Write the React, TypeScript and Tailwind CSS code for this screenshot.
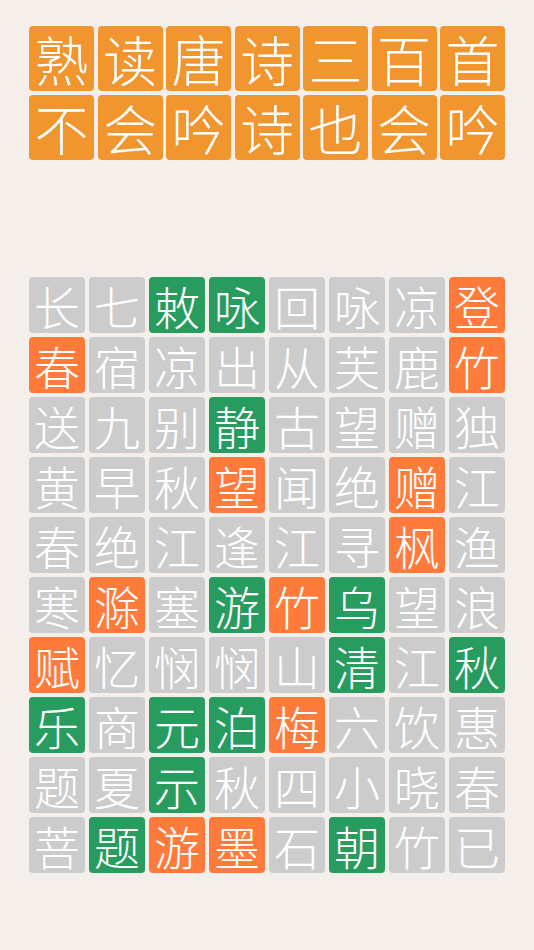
import React from 'react'

const TITLE = ['熟读唐诗三百首', '不会吟诗也会吟']

// g = grey, G = green, O = orange
const ROWS: [string, string][] = [
  ['长七敕咏回咏凉登', 'ggGGgggO'],
  ['春宿凉出从芙鹿竹', 'OggggggO'],
  ['送九别静古望赠独', 'gggGgggg'],
  ['黄早秋望闻绝赠江', 'gggOggOg'],
  ['春绝江逢江寻枫渔', 'ggggggOg'],
  ['寒滁塞游竹乌望浪', 'gOgGOGgg'],
  ['赋忆悯悯山清江秋', 'OggggGgG'],
  ['乐商元泊梅六饮惠', 'GgGGOggg'],
  ['题夏示秋四小晓春', 'ggGggggg'],
  ['菩题游墨石朝竹已', 'gGOOgGgg'],
]

const tileColor: Record<string, string> = {
  g: 'bg-[#cccccc]',
  G: 'bg-[#289b5f]',
  O: 'bg-[#fe7b3c]',
}

const font = { fontFamily: '"Noto Sans CJK SC", "Noto Sans", sans-serif' }

export default function App() {
  return (
    <div className="w-[534px] h-[950px] bg-[#f4efeb] overflow-hidden" style={font}>
      {/* Title */}
      <div className="pt-[26px] px-[29px] flex flex-col gap-[4px]">
        {TITLE.map((line, i) => (
          <div key={i} className="grid grid-cols-7 gap-[3.5px]">
            {line.split('').map((ch, j) => (
              <div
                key={j}
                className="h-[65px] rounded-[4px] bg-[#f1952f] text-white flex items-center justify-center text-[54px] font-light leading-none"
              >
                {ch}
              </div>
            ))}
          </div>
        ))}
      </div>

      {/* Board */}
      <div className="mt-[117px] px-[29px] grid grid-cols-8 gap-[4px]">
        {ROWS.map(([chars, colors], r) =>
          chars.split('').map((ch, c) => (
            <div
              key={`${r}-${c}`}
              className={`h-[56px] rounded-[4px] ${tileColor[colors[c]]} text-white flex items-center justify-center text-[46px] font-light leading-none`}
            >
              {ch}
            </div>
          ))
        )}
      </div>
    </div>
  )
}
